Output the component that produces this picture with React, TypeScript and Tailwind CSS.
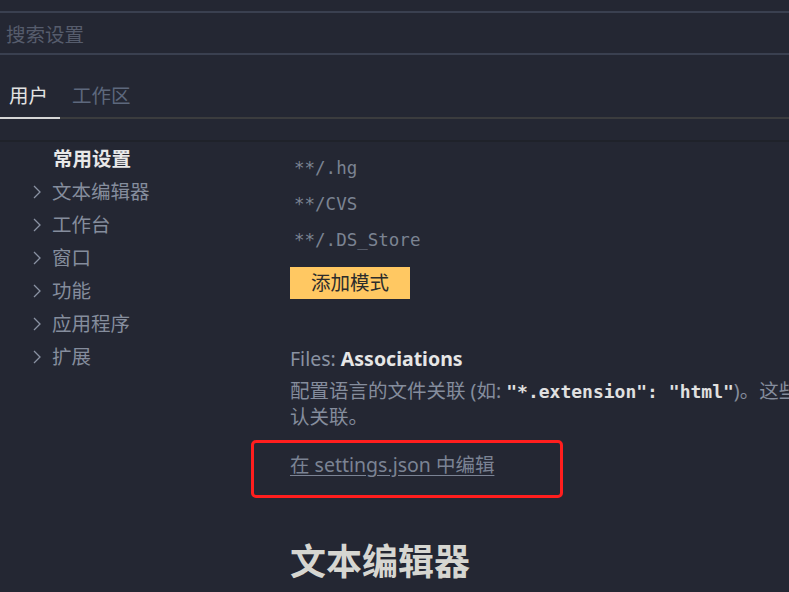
import React from 'react';

const sans = { fontFamily: '"Noto Sans", "Noto Sans CJK SC", sans-serif' };

const navItems = ['文本编辑器', '工作台', '窗口', '功能', '应用程序', '扩展'];
const patterns = ['**/.hg', '**/CVS', '**/.DS_Store'];

function Chevron() {
  return (
    <svg width="10" height="16" viewBox="0 0 10 16" className="shrink-0">
      <polyline points="2,2 8,8 2,14" fill="none" stroke="#8a92a3" strokeWidth="1.3" />
    </svg>
  );
}

export default function App() {
  return (
    <div
      className="relative h-[592px] w-[789px] overflow-hidden bg-[#242733] pt-[11px] text-[19.5px]"
      style={sans}
    >
      {/* 搜索框 */}
      <div className="flex h-[44px] items-center border-y-2 border-[#3a4050] px-[6px] pt-[4px] text-[#565c6c]">
        搜索设置
      </div>

      {/* 标签页 */}
      <div className="flex h-[64px] items-end border-b-2 border-[#3b3c3e]">
        <div className="-mb-[2px] w-[60px] border-b-2 border-[#d6d6d6] pb-[9px] pl-[9px] leading-[24px] text-[#e2e2e2]">
          用户
        </div>
        <div className="pb-[9px] pl-[12px] leading-[24px] text-[#5d687d]">工作区</div>
      </div>

      <div className="mt-[21px] flex border-t-2 border-[#1f222a]">
        {/* 左侧目录 */}
        <div className="w-[250px] shrink-0">
          <div className="flex h-[33px] items-center pl-[53px] font-bold text-[#e8e8e8]">常用设置</div>
          {navItems.map((item) => (
            <div key={item} className="flex h-[33px] items-center gap-[10px] pl-[32px] text-[#858d9d]">
              <Chevron />
              <span>{item}</span>
            </div>
          ))}
        </div>

        {/* 设置内容 */}
        <div className="min-w-0 flex-1 overflow-hidden pl-[40px] pt-[8px]">
          {patterns.map((p) => (
            <div
              key={p}
              className="h-[36px] pl-[4px] text-[17.5px] leading-[36px] text-[#7b8392]"
              style={{ fontFamily: '"DejaVu Sans Mono", monospace' }}
            >
              {p}
            </div>
          ))}
          <button className="mt-[9px] flex h-[32px] w-[120px] items-center justify-center bg-[#ffc862] text-[#2c2c2c]">
            添加模式
          </button>

          <div className="mt-[47px] leading-[26px]">
            <span className="text-[#8a92a2]">Files: </span>
            <span className="font-bold text-[#e6e6e6]">Associations</span>
          </div>
          <div className="mt-[6px] whitespace-nowrap leading-[25px] text-[#858d9d]">
            <div>
              配置语言的文件关联 (如:{' '}
              <span
                className="text-[18px] font-bold text-[#e0e0e0]"
                style={{ fontFamily: '"DejaVu Sans Mono", monospace' }}
              >
                "*.extension": "html"
              </span>
              )。这些关联的优先级高于已安装语言的默
            </div>
            <div>认关联。</div>
          </div>

          <div className="mt-[23px] leading-[26px]">
            <a className="text-[#7b8394] underline underline-offset-[3px]">在 settings.json 中编辑</a>
          </div>

          <div className="mt-[60px] text-[36px] font-bold leading-[48px] text-[#d6d6d1]">文本编辑器</div>
        </div>
      </div>

      {/* 标注框 */}
      <div className="absolute left-[251px] top-[440px] h-[58px] w-[312px] rounded-[5px] border-[3px] border-[#ff1e1e]" />
    </div>
  );
}
